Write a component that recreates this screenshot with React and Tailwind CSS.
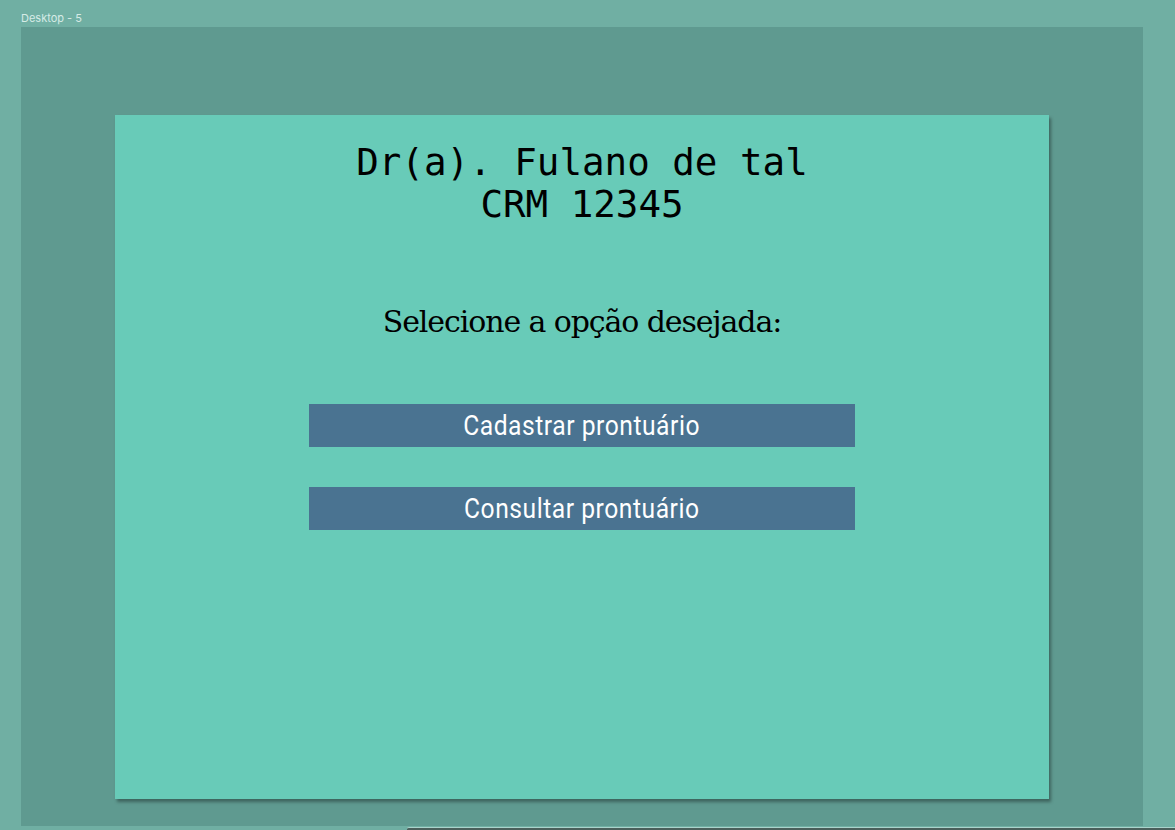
const MenuButton = ({ label }) => (
  <button className="w-[546px] h-[43px] bg-[#4a7391] text-white flex items-center justify-center">
    <span className="inline-block scale-x-[0.88] text-[28px] leading-none font-['Roboto',sans-serif] tracking-[0.6px]">
      {label}
    </span>
  </button>
);

const App = () => {
  return (
    <div className="w-[1175px] h-[830px] bg-[#70afa3] overflow-hidden relative font-['Inter',sans-serif]">
      <div className="absolute left-[21px] top-[13px] text-[11px] leading-none text-[#d6ebe6]">Desktop - 5</div>
      <div className="ml-[21px] mt-[27px] w-[1122px] h-[799px] bg-[#5f9a90] pt-[88px] pl-[94px]">
        <div className="w-[934px] h-[684px] bg-[#68cbb8] shadow-[2px_3px_3px_rgba(0,0,0,0.35)] flex flex-col items-center pt-[26px]">
          <h1 className="text-center text-[37.5px] leading-[42px] text-black font-['DejaVu_Sans_Mono',monospace] tracking-[0px]">
            Dr(a). Fulano de tal
            <br />
            CRM 12345
          </h1>
          <p className="mt-[82px] text-[30px] leading-none text-black font-['DejaVu_Serif',serif] tracking-[-1.1px]">
            Selecione a opção desejada:
          </p>
          <div className="mt-[67px] flex flex-col gap-[40px]">
            <MenuButton label="Cadastrar prontuário" />
            <MenuButton label="Consultar prontuário" />
          </div>
        </div>
      </div>
      <div className="ml-[407px] mt-[1px] h-[3px] bg-[#4a5f5b] border-t border-[#a9d3cb] rounded-tl-[2px]" />
    </div>
  );
};

export default App;
